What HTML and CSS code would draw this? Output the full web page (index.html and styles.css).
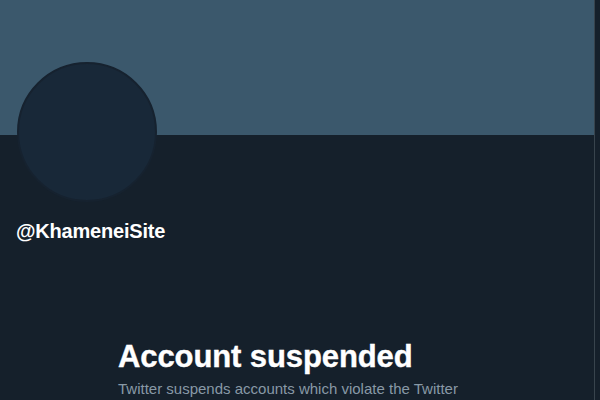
FILE: index.html
```html
<!DOCTYPE html>
<html>
<head>
<meta charset="utf-8">
<link rel="stylesheet" href="styles.css">
</head>
<body>
<div class="column">
  <div class="banner"></div>
  <div class="profile">
    <div class="avatar"></div>
    <div class="handle">@KhameneiSite</div>
  </div>
  <div class="notice">
    <h1 class="title">Account suspended</h1>
    <p class="desc">Twitter suspends accounts which violate the Twitter Rules. Learn more</p>
  </div>
</div>
</body>
</html>
```

FILE: styles.css
```css
html, body {
  margin: 0;
  padding: 0;
  height: 100%;
  background: #15202b;
  overflow: hidden;
}
body {
  font-family: "Liberation Sans", Arial, sans-serif;
  color: #ffffff;
}
.column {
  width: 594px;
  min-height: 100%;
  border-right: 1px solid #38444d;
  box-sizing: content-box;
}
.banner {
  height: 135px;
  background: #3b586c;
}
.profile {
  padding: 0 16px;
}
.avatar {
  width: 136px;
  height: 136px;
  margin-top: -73px;
  margin-left: 1px;
  border-radius: 50%;
  background: #182838;
  border: 2px solid #16222f;
}
.handle {
  margin-top: 17px;
  font-size: 20px;
  font-weight: 700;
  line-height: 24px;
  letter-spacing: -0.2px;
}
.notice {
  width: 358px;
  margin: 96px auto 0;
}
.title {
  margin: 0;
  font-size: 31px;
  font-weight: 700;
  line-height: 36px;
  letter-spacing: -0.1px;
  -webkit-text-stroke: 0.4px #ffffff;
}
.desc {
  margin: 4px 0 0;
  font-size: 15px;
  line-height: 20px;
  color: #8899a6;
}
```
